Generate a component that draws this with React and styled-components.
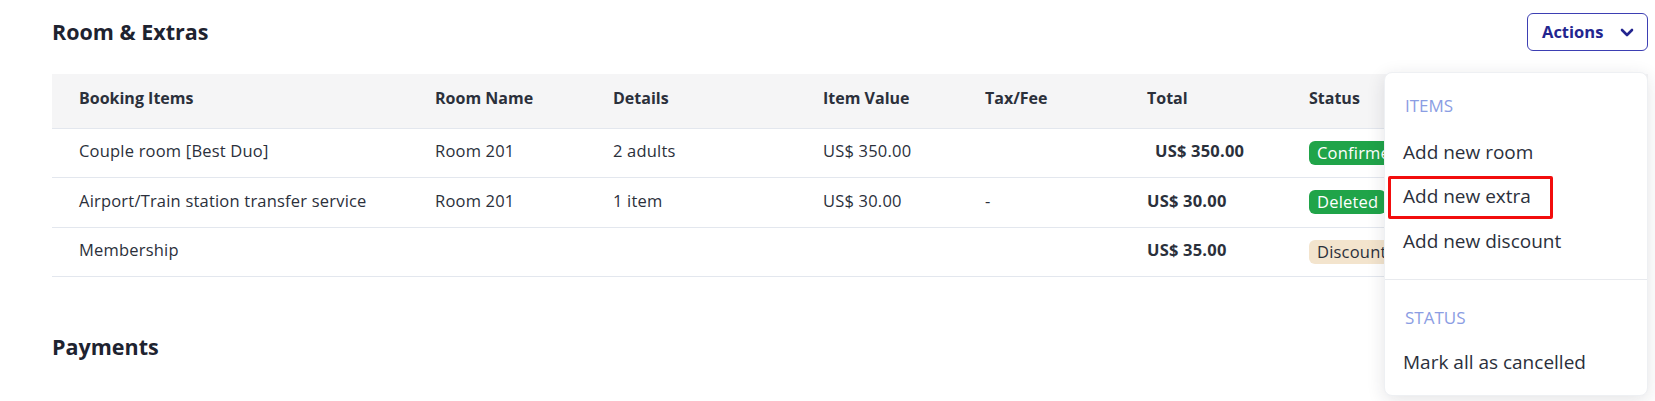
import React from "react";
import styled, { createGlobalStyle } from "styled-components";

const GlobalStyle = createGlobalStyle`
  body {
    margin: 0;
    background: #fff;
    font-family: "Open Sans", "Noto Sans", sans-serif;
    color: #2b303b;
  }
`;

const rows = [
  {
    item: "Couple room [Best Duo]",
    room: "Room 201",
    details: "2 adults",
    value: "US$ 350.00",
    tax: "",
    total: "US$ 350.00",
    indent: true,
    status: "Confirmed",
    kind: "ok",
  },
  {
    item: "Airport/Train station transfer service",
    room: "Room 201",
    details: "1 item",
    value: "US$ 30.00",
    tax: "-",
    total: "US$ 30.00",
    status: "Deleted",
    kind: "ok",
  },
  {
    item: "Membership",
    room: "",
    details: "",
    value: "",
    tax: "",
    total: "US$ 35.00",
    status: "Discount",
    kind: "discount",
  },
];

const columns = [
  { label: "Booking Items", width: 356 },
  { label: "Room Name", width: 178 },
  { label: "Details", width: 210 },
  { label: "Item Value", width: 162 },
  { label: "Tax/Fee", width: 162 },
  { label: "Total", width: 162 },
  { label: "Status" },
];

const App = () => {
  return (
    <Page>
      <GlobalStyle />
      <SectionHeader>
        <Title>Room &amp; Extras</Title>
        <ActionsWrap>
          <ActionsButton>
            Actions
            <svg width="14" height="9" viewBox="0 0 14 9">
              <polyline
                points="2,2 7,7 12,2"
                fill="none"
                stroke="currentColor"
                strokeWidth="2.6"
                strokeLinecap="round"
                strokeLinejoin="round"
              />
            </svg>
          </ActionsButton>
          <Menu>
            <MenuLabel>Items</MenuLabel>
            <MenuItem>Add new room</MenuItem>
            <MenuItem $highlight>Add new extra</MenuItem>
            <MenuItem>Add new discount</MenuItem>
            <MenuDivider />
            <MenuLabel $second>Status</MenuLabel>
            <MenuItem>Mark all as cancelled</MenuItem>
          </Menu>
        </ActionsWrap>
      </SectionHeader>

      <Table>
        <colgroup>
          {columns.map((c) => (
            <col key={c.label} style={c.width ? { width: c.width } : undefined} />
          ))}
        </colgroup>
        <thead>
          <tr>
            {columns.map((c) => (
              <Th key={c.label}>{c.label}</Th>
            ))}
          </tr>
        </thead>
        <tbody>
          {rows.map((r) => (
            <tr key={r.item}>
              <Td>{r.item}</Td>
              <Td>{r.room}</Td>
              <Td>{r.details}</Td>
              <Td>{r.value}</Td>
              <Td>{r.tax}</Td>
              <Td $bold $indent={r.indent}>
                {r.total}
              </Td>
              <Td>
                <Badge $kind={r.kind}>{r.status}</Badge>
              </Td>
            </tr>
          ))}
        </tbody>
      </Table>

      <PaymentsTitle>Payments</PaymentsTitle>
    </Page>
  );
};

const Page = styled.div`
  padding: 13px 7px 0 52px;
  height: 401px;
  box-sizing: border-box;
  overflow: hidden;
`;

const SectionHeader = styled.div`
  display: flex;
  align-items: center;
  justify-content: space-between;
`;

const Title = styled.h2`
  margin: 0 0 2px;
  font-size: 21.5px;
  font-weight: 700;
  color: #1e2330;
`;

const PaymentsTitle = styled(Title)`
  margin-top: 55px;
`;

const ActionsWrap = styled.div`
  position: relative;
`;

const ActionsButton = styled.button`
  display: flex;
  align-items: center;
  justify-content: space-between;
  width: 121px;
  height: 38px;
  box-sizing: border-box;
  padding: 0 13px 2px 14px;
  border: 1.5px solid #3d3fb3;
  border-radius: 6px;
  background: #fff;
  color: #23258f;
  font-family: inherit;
  font-size: 16.5px;
  font-weight: 700;
  cursor: pointer;

  svg {
    margin-top: 2px;
  }
`;

const Menu = styled.div`
  position: absolute;
  top: 59px;
  right: 0;
  width: 264px;
  height: 324px;
  box-sizing: border-box;
  padding: 20px 3px 0;
  background: #fff;
  border: 1px solid #eef0f3;
  border-radius: 8px;
  box-shadow: 0 4px 18px rgba(30, 35, 50, 0.12);
  z-index: 2;
`;

const MenuLabel = styled.div`
  padding: 0 17px;
  margin-top: ${(p) => (p.$second ? "25px" : "0")};
  margin-bottom: ${(p) => (p.$second ? "10px" : "12px")};
  line-height: 26px;
  font-size: 17px;
  text-transform: uppercase;
  color: #8b9de3;
`;

const MenuItem = styled.div`
  display: flex;
  align-items: center;
  height: 44px;
  box-sizing: border-box;
  padding: 0 15px 3px;
  font-size: 19px;
  color: #2b303b;
  cursor: pointer;
  ${(p) =>
    p.$highlight &&
    `
    width: 165px;
    height: 43px;
    margin: 1px 0;
    padding: 0 12px 3px;
    border: 3px solid #f20d0d;
    border-radius: 2px;
  `}
`;

const MenuDivider = styled.div`
  height: 1px;
  margin: 15px -3px 0;
  background: #e8eaee;
`;

const Table = styled.table`
  width: 100%;
  margin-top: 23px;
  border-collapse: collapse;
  table-layout: fixed;
`;

const Th = styled.th`
  box-sizing: border-box;
  height: 54px;
  padding: 0 0 6px 27px;
  background: #f5f5f6;
  border-bottom: 1px solid #e3e7ee;
  text-align: left;
  font-size: 16px;
  font-weight: 700;
  color: #2b303b;
  white-space: nowrap;
`;

const Td = styled.td`
  box-sizing: border-box;
  height: 49.5px;
  padding: 0 0 4px ${(p) => (p.$indent ? "35px" : "27px")};
  border-bottom: 1px solid #e3e7ee;
  font-size: 16.5px;
  letter-spacing: 0.2px;
  font-weight: ${(p) => (p.$bold ? 700 : 400)};
  color: #2b303b;
  white-space: nowrap;
`;

const Badge = styled.span`
  display: inline-flex;
  align-items: center;
  height: 24px;
  padding: 0 8px 1px;
  margin-top: 4px;
  box-sizing: border-box;
  border-radius: 6px;
  font-size: 16.5px;
  background: ${(p) => (p.$kind === "discount" ? "#f3e4cd" : "#20a449")};
  color: ${(p) => (p.$kind === "discount" ? "#2b303b" : "#fff")};
`;

export default App;
